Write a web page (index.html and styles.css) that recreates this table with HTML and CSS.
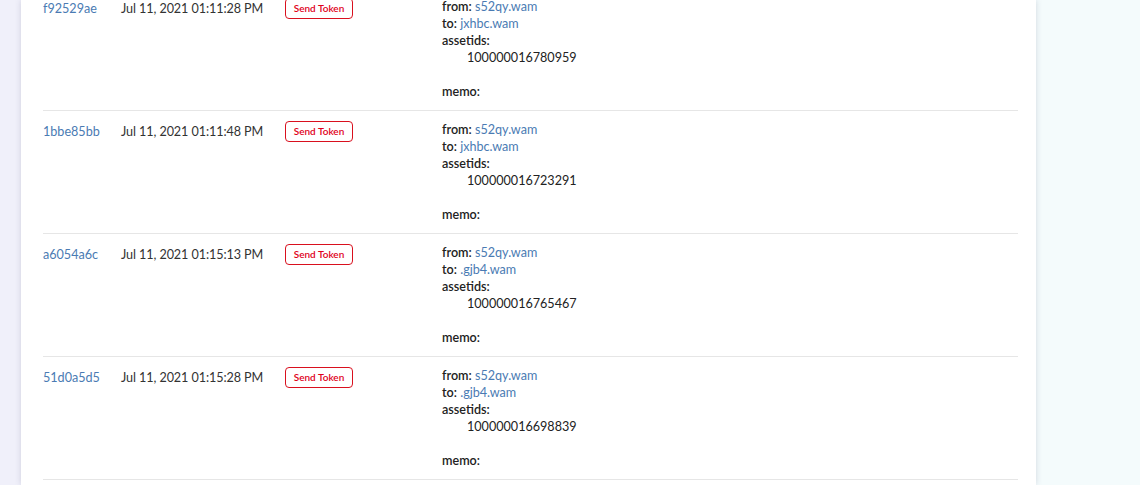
FILE: index.html
```html
<!DOCTYPE html>
<html lang="en">
<head>
    <meta charset="UTF-8">
    <meta name="viewport" content="width=device-width, initial-scale=1.0">
    <title>Transactions</title>
    <link rel="stylesheet" href="styles.css">
</head>
<body>
    <div class="side-left"></div>

    <div class="card">
        <div class="tx-list">
            <div class="tx-row">
                <div class="tx-hash"><a href="#">f92529ae</a></div>
                <div class="tx-date">Jul 11, 2021 01:11:28 PM</div>
                <div class="tx-type"><span class="badge">Send Token</span></div>
                <div class="tx-data">
                    <div><b>from:</b> <a href="#">s52qy.wam</a></div>
                    <div><b>to:</b> <a href="#">jxhbc.wam</a></div>
                    <div><b>assetids:</b></div>
                    <div class="asset">100000016780959</div>
                    <div class="blank"></div>
                    <div><b>memo:</b></div>
                </div>
            </div>

            <div class="tx-row">
                <div class="tx-hash"><a href="#">1bbe85bb</a></div>
                <div class="tx-date">Jul 11, 2021 01:11:48 PM</div>
                <div class="tx-type"><span class="badge">Send Token</span></div>
                <div class="tx-data">
                    <div><b>from:</b> <a href="#">s52qy.wam</a></div>
                    <div><b>to:</b> <a href="#">jxhbc.wam</a></div>
                    <div><b>assetids:</b></div>
                    <div class="asset">100000016723291</div>
                    <div class="blank"></div>
                    <div><b>memo:</b></div>
                </div>
            </div>

            <div class="tx-row">
                <div class="tx-hash"><a href="#">a6054a6c</a></div>
                <div class="tx-date">Jul 11, 2021 01:15:13 PM</div>
                <div class="tx-type"><span class="badge">Send Token</span></div>
                <div class="tx-data">
                    <div><b>from:</b> <a href="#">s52qy.wam</a></div>
                    <div><b>to:</b> <a href="#">.gjb4.wam</a></div>
                    <div><b>assetids:</b></div>
                    <div class="asset">100000016765467</div>
                    <div class="blank"></div>
                    <div><b>memo:</b></div>
                </div>
            </div>

            <div class="tx-row">
                <div class="tx-hash"><a href="#">51d0a5d5</a></div>
                <div class="tx-date">Jul 11, 2021 01:15:28 PM</div>
                <div class="tx-type"><span class="badge">Send Token</span></div>
                <div class="tx-data">
                    <div><b>from:</b> <a href="#">s52qy.wam</a></div>
                    <div><b>to:</b> <a href="#">.gjb4.wam</a></div>
                    <div><b>assetids:</b></div>
                    <div class="asset">100000016698839</div>
                    <div class="blank"></div>
                    <div><b>memo:</b></div>
                </div>
            </div>

            <div class="tx-row"></div>
        </div>
    </div>

    <div class="side-right"></div>
</body>
</html>
```

FILE: styles.css
```css
html, body {
    margin: 0;
    height: 100%;
}
body {
    display: flex;
    overflow: hidden;
    font-family: Lato, "Open Sans", sans-serif;
    font-size: 12.6px;
    color: #222;
    background-color: #f4fbfc;
}
.side-left {
    width: 21px;
    flex-shrink: 0;
    background-color: #f0f0fa;
}
.card {
    width: 1015px;
    flex-shrink: 0;
    background-color: white;
    padding: 0 18px 0 22px;
    box-sizing: border-box;
    box-shadow: 0 0 6px rgba(60,60,100,0.18);
    position: relative;
    z-index: 1;
}
.side-right {
    flex: 1;
}
.tx-list {
    margin-top: -12px;
}
.tx-row {
    display: grid;
    grid-template-columns: 78px 164px 157px 1fr;
    height: 123px;
    box-sizing: border-box;
    border-bottom: 1px solid #e6e6e6;
    line-height: 17px;
}
.tx-hash, .tx-date, .tx-type {
    padding-top: 12px;
}
.tx-date {
    color: #333;
    letter-spacing: -0.08px;
}
.tx-data {
    padding-top: 10px;
}
a {
    color: #4a7bb3;
    text-decoration: none;
}
b {
    font-weight: 600;
}
.asset {
    padding-left: 25px;
}
.blank {
    height: 17px;
}
.badge {
    display: inline-block;
    width: 68px;
    height: 21px;
    box-sizing: border-box;
    border: 1px solid #d9101e;
    border-radius: 4px;
    color: #e0001a;
    font-size: 10px;
    font-weight: 600;
    line-height: 19px;
    text-align: center;
    margin-top: -2px;
    vertical-align: top;
}
```
